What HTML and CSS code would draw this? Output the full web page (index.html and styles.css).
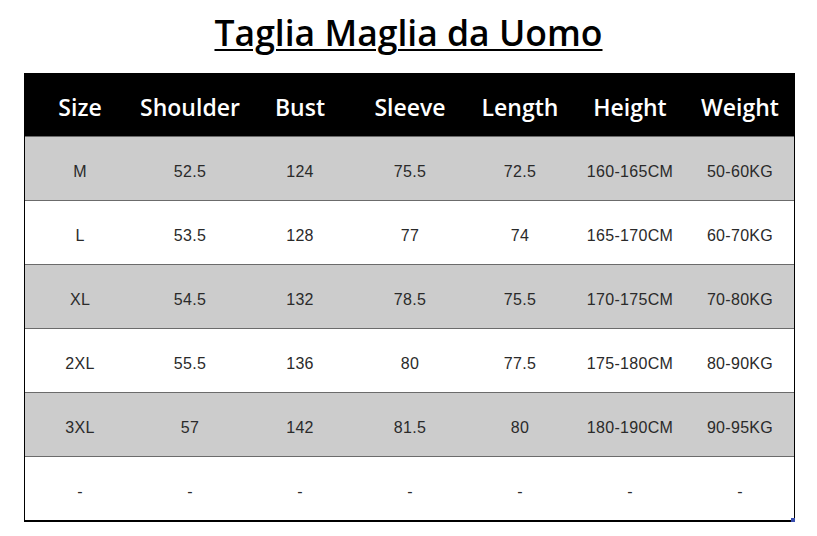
FILE: index.html
```html
<!DOCTYPE html>
<html>
<head>
<meta charset="utf-8">
<link rel="stylesheet" href="styles.css">
</head>
<body>
<div class="page">
  <h1 class="title">Taglia Maglia da Uomo</h1>
  <div class="table">
    <div class="row head">
      <div>Size</div><div>Shoulder</div><div>Bust</div><div>Sleeve</div><div>Length</div><div>Height</div><div>Weight</div>
    </div>
    <div class="row gray">
      <div>M</div><div>52.5</div><div>124</div><div>75.5</div><div>72.5</div><div>160-165CM</div><div>50-60KG</div>
    </div>
    <div class="row">
      <div>L</div><div>53.5</div><div>128</div><div>77</div><div>74</div><div>165-170CM</div><div>60-70KG</div>
    </div>
    <div class="row gray">
      <div>XL</div><div>54.5</div><div>132</div><div>78.5</div><div>75.5</div><div>170-175CM</div><div>70-80KG</div>
    </div>
    <div class="row">
      <div>2XL</div><div>55.5</div><div>136</div><div>80</div><div>77.5</div><div>175-180CM</div><div>80-90KG</div>
    </div>
    <div class="row gray">
      <div>3XL</div><div>57</div><div>142</div><div>81.5</div><div>80</div><div>180-190CM</div><div>90-95KG</div>
    </div>
    <div class="row last">
      <div>-</div><div>-</div><div>-</div><div>-</div><div>-</div><div>-</div><div>-</div>
    </div>
    <span class="corner"></span>
  </div>
</div>
</body>
</html>
```

FILE: styles.css
```css
html, body {
  margin: 0;
  padding: 0;
  background: #ffffff;
}
.page {
  width: 817px;
  height: 536px;
  padding-top: 10px;
  box-sizing: border-box;
}
.title {
  margin: 0;
  height: 63px;
  text-align: center;
  font-family: "Open Sans", "Noto Sans", sans-serif;
  font-weight: 600;
  font-size: 35.5px;
  line-height: 44px;
  color: #000;
  text-decoration: underline;
  text-decoration-thickness: 2px;
  text-underline-offset: 3px;
}
.table {
  position: relative;
  margin-left: 24px;
  width: 771px;
  box-sizing: border-box;
  border-left: 1px solid #000;
  border-right: 1px solid #000;
  border-bottom: 2px solid #000;
}
.row {
  display: grid;
  grid-template-columns: repeat(7, 110px);
  height: 64px;
  box-sizing: border-box;
  border-bottom: 1px solid #6b6b6b;
  align-items: center;
  padding-top: 7px;
  font-family: "Liberation Sans", Arial, sans-serif;
  font-size: 16px;
  letter-spacing: 0.3px;
  color: #2a2a2a;
}
.row > div {
  text-align: center;
}
.row.head {
  background: #000;
  color: #fff;
  font-family: "Open Sans", "Noto Sans", sans-serif;
  font-weight: 600;
  font-size: 23px;
  letter-spacing: 0;
  padding-top: 4px;
}
.row.gray {
  background: #cccccc;
}
.row.last {
  border-bottom: none;
  height: 63px;
}
.corner {
  position: absolute;
  right: -1px;
  bottom: -2px;
  width: 4px;
  height: 4px;
  background: #3a4fb0;
}
```
